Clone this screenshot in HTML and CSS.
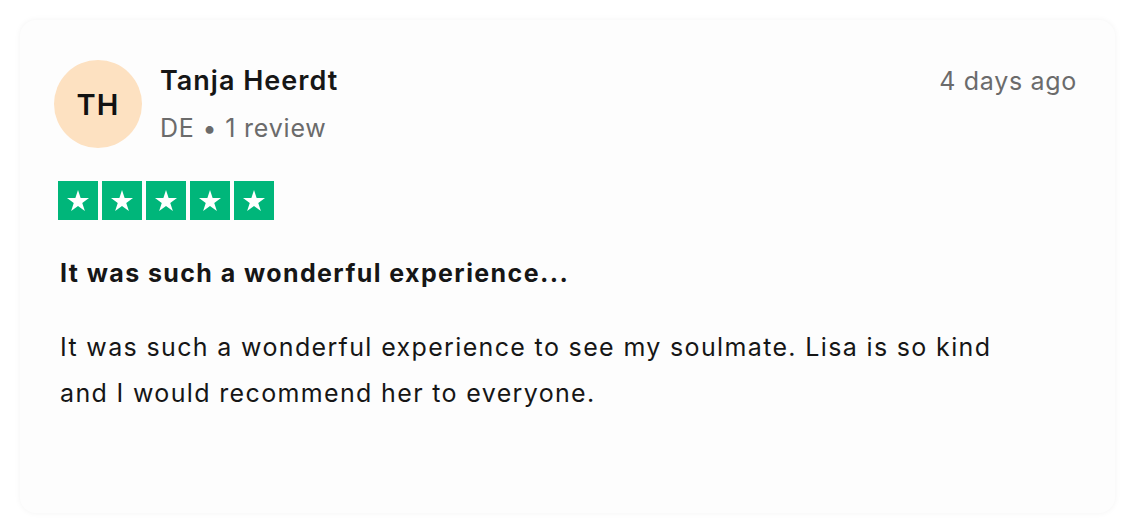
FILE: index.html
```html
<!DOCTYPE html>
<html lang="en">
<head>
<meta charset="utf-8">
<link rel="stylesheet" href="styles.css">
</head>
<body>
<div class="card">
  <div class="header">
    <div class="avatar">TH</div>
    <div class="who">
      <div class="name">Tanja Heerdt</div>
      <div class="meta">DE • 1 review</div>
    </div>
    <div class="date">4 days ago</div>
  </div>
  <div class="stars">
    <span class="star"><svg viewBox="0 0 24 24"><path d="M12 3.2l2.1 6.4h6.7l-5.4 3.9 2.1 6.4L12 16l-5.5 3.9 2.1-6.4-5.4-3.9h6.7z" fill="#fff"/></svg></span>
    <span class="star"><svg viewBox="0 0 24 24"><path d="M12 3.2l2.1 6.4h6.7l-5.4 3.9 2.1 6.4L12 16l-5.5 3.9 2.1-6.4-5.4-3.9h6.7z" fill="#fff"/></svg></span>
    <span class="star"><svg viewBox="0 0 24 24"><path d="M12 3.2l2.1 6.4h6.7l-5.4 3.9 2.1 6.4L12 16l-5.5 3.9 2.1-6.4-5.4-3.9h6.7z" fill="#fff"/></svg></span>
    <span class="star"><svg viewBox="0 0 24 24"><path d="M12 3.2l2.1 6.4h6.7l-5.4 3.9 2.1 6.4L12 16l-5.5 3.9 2.1-6.4-5.4-3.9h6.7z" fill="#fff"/></svg></span>
    <span class="star"><svg viewBox="0 0 24 24"><path d="M12 3.2l2.1 6.4h6.7l-5.4 3.9 2.1 6.4L12 16l-5.5 3.9 2.1-6.4-5.4-3.9h6.7z" fill="#fff"/></svg></span>
  </div>
  <h2 class="title">It was such a wonderful experience...</h2>
  <p class="text">It was such a wonderful experience to see my soulmate. Lisa is so kind and I would recommend her to everyone.</p>
</div>
</body>
</html>
```

FILE: styles.css
```css
html, body {
  margin: 0;
  padding: 0;
  background: #ffffff;
}
body {
  padding: 20px 25px 19px 20px;
  font-family: Inter, "Liberation Sans", sans-serif;
  color: #161616;
}
.card {
  box-sizing: border-box;
  height: 493px;
  background: #fdfdfd;
  border-radius: 16px;
  box-shadow: 0 0 6px rgba(0,0,0,0.05);
  padding: 40px 38px 0 38px;
}
.header {
  display: flex;
  align-items: flex-start;
  margin-left: -4px;
}
.avatar {
  width: 88px;
  height: 88px;
  border-radius: 50%;
  background: #fde1c1;
  display: flex;
  align-items: center;
  justify-content: center;
  font-weight: 600;
  font-size: 29px;
  letter-spacing: 1px;
  color: #111;
  flex: none;
}
.who {
  margin-left: 18px;
  flex: 1;
}
.name {
  font-size: 27px;
  font-weight: 600;
  letter-spacing: 1px;
  line-height: 32px;
  margin-top: 5px;
  color: #161616;
}
.meta {
  font-size: 25px;
  letter-spacing: 0.8px;
  line-height: 32px;
  margin-top: 15px;
  color: #6b6b6b;
}
.date {
  font-size: 25px;
  letter-spacing: 0.7px;
  line-height: 32px;
  margin-top: 5px;
  color: #6b6b6b;
}
.stars {
  display: flex;
  gap: 4px;
  margin-top: 33px;
}
.star {
  width: 40px;
  height: 39px;
  background: #00b67a;
  display: flex;
  align-items: center;
  justify-content: center;
}
.star svg {
  width: 30px;
  height: 30px;
}
.title {
  margin: 38px 0 0 2px;
  font-size: 25px;
  line-height: 30px;
  font-weight: 700;
  letter-spacing: 1.4px;
  color: #161616;
}
.text {
  margin: 36px 0 0 2px;
  font-size: 25px;
  letter-spacing: 1.35px;
  line-height: 46px;
  color: #161616;
  max-width: 960px;
}
```
